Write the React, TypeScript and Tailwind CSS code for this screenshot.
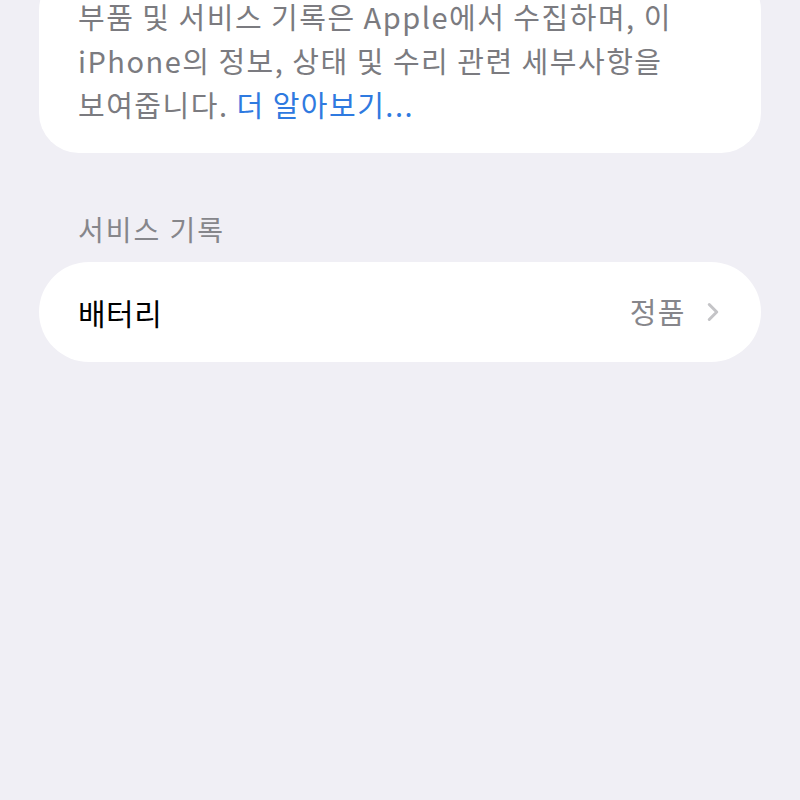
import { ChevronRight } from 'lucide-react'

const font = { fontFamily: '"Noto Sans CJK KR", "Noto Sans", sans-serif' }

export default function App() {
  return (
    <div className="min-h-[800px] w-[800px] overflow-hidden bg-[#f0eff5]" style={font}>
      <div className="mx-[39px] mt-[-30px] rounded-[40px] bg-white pl-[39px] pr-[30px] pt-[24px] pb-[27px]">
        <p className="whitespace-nowrap text-[29px] leading-[44px] tracking-[1.5px] text-[#7b7b80]">
          부품 및 서비스 기록은 Apple에서 수집하며, 이
          <br />
          iPhone의 정보, 상태 및 수리 관련 세부사항을
          <br />
          보여줍니다. <span className="text-[#2f7ae0]">더 알아보기...</span>
        </p>
      </div>

      <div className="mt-[56px] px-[78px] text-[28px] leading-[40px] tracking-[2px] text-[#86868b]">
        서비스 기록
      </div>

      <div className="mx-[39px] mt-[13px] flex h-[100px] items-center justify-between rounded-[50px] bg-white pl-[39px] pr-[33px]">
        <span className="text-[30px] tracking-[0.5px] text-black">배터리</span>
        <div className="flex items-center gap-[12px]">
          <span className="text-[29px] tracking-[1.5px] text-[#86868b]">정품</span>
          <ChevronRight className="h-[30px] w-[30px] text-[#c4c4c7]" strokeWidth={2.4} />
        </div>
      </div>
    </div>
  )
}
